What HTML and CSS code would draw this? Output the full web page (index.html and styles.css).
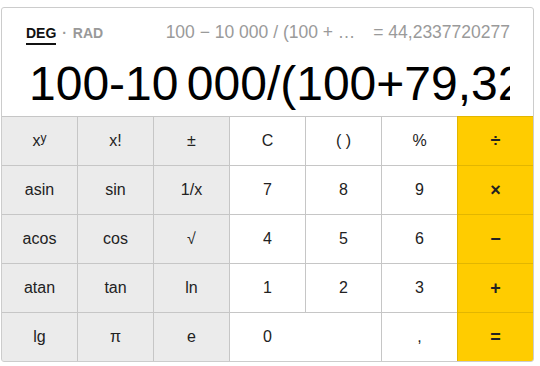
FILE: index.html
```html
<!DOCTYPE html>
<html lang="ru">

<head>
    <meta charset="UTF-8">
    <title>Калькулятор</title>
    <link rel="stylesheet" href="styles.css">
</head>

<body>

    <div class="calc">
        <div class="screen">
            <div class="top">
                <div class="modes">
                    <span class="mode active">DEG</span>
                    <span class="dot">·</span>
                    <span class="mode">RAD</span>
                </div>
                <div class="history">
                    <span>100 − 10 000 / (100 + …</span>
                    <span class="result">= 44,2337720277</span>
                </div>
            </div>
            <div class="display">100-10 000/(100+79,32</div>
        </div>

        <div class="keys">
            <div class="key fn">x<sup>y</sup></div>
            <div class="key fn">x!</div>
            <div class="key fn">±</div>
            <div class="key">C</div>
            <div class="key">( )</div>
            <div class="key">%</div>
            <div class="key op">÷</div>

            <div class="key fn">asin</div>
            <div class="key fn">sin</div>
            <div class="key fn">1/x</div>
            <div class="key">7</div>
            <div class="key">8</div>
            <div class="key">9</div>
            <div class="key op">×</div>

            <div class="key fn">acos</div>
            <div class="key fn">cos</div>
            <div class="key fn">√</div>
            <div class="key">4</div>
            <div class="key">5</div>
            <div class="key">6</div>
            <div class="key op">−</div>

            <div class="key fn">atan</div>
            <div class="key fn">tan</div>
            <div class="key fn">ln</div>
            <div class="key">1</div>
            <div class="key">2</div>
            <div class="key">3</div>
            <div class="key op">+</div>

            <div class="key fn">lg</div>
            <div class="key fn">π</div>
            <div class="key fn">e</div>
            <div class="key zero">0</div>
            <div class="key">,</div>
            <div class="key op">=</div>
        </div>
    </div>

</body>

</html>
```

FILE: styles.css
```css
body {
    font-family: "Liberation Sans", Arial, sans-serif;
    margin: 7px 0 0 1px;
    background: #fff;
    color: #222;
}

.calc {
    width: 531px;
    border: 1px solid #cccccc;
    border-radius: 3px;
    overflow: hidden;
}

.screen {
    height: 108px;
    box-sizing: border-box;
    padding: 14px 23px 0 24px;
    overflow: hidden;
}

.top {
    display: flex;
    justify-content: space-between;
    align-items: baseline;
    line-height: 20px;
}

.modes {
    font-size: 14px;
    font-weight: bold;
    color: #999;
}

.mode.active {
    color: #111;
    display: inline-block;
    line-height: 19px;
    border-bottom: 2px solid #111;
}

.dot {
    margin: 0 2px;
}

.history {
    font-size: 17.5px;
    color: #9a9a9a;
    white-space: nowrap;
}

.result {
    margin-left: 13px;
}

.display {
    font-size: 48px;
    line-height: 56px;
    margin-top: 11px;
    padding-left: 3px;
    color: #000;
    white-space: nowrap;
    overflow: hidden;
    word-spacing: -5px;
}

.keys {
    display: grid;
    grid-template-columns: repeat(7, 75px);
    grid-template-rows: repeat(5, 48px);
    gap: 1px;
    background: #c6c6c6;
    border-top: 1px solid #c6c6c6;
}

.key {
    display: flex;
    align-items: center;
    justify-content: center;
    background: #fff;
    font-size: 16px;
}

.key sup {
    font-size: 12px;
    line-height: 0;
    position: relative;
    top: -3px;
}

.fn {
    background: #ebebeb;
}

.op {
    background: #ffcc00;
    outline: 1px solid #e2b600;
    font-size: 18px;
    font-weight: bold;
}

.zero {
    grid-column: span 2;
    justify-content: flex-start;
    padding-left: 33px;
}
```
